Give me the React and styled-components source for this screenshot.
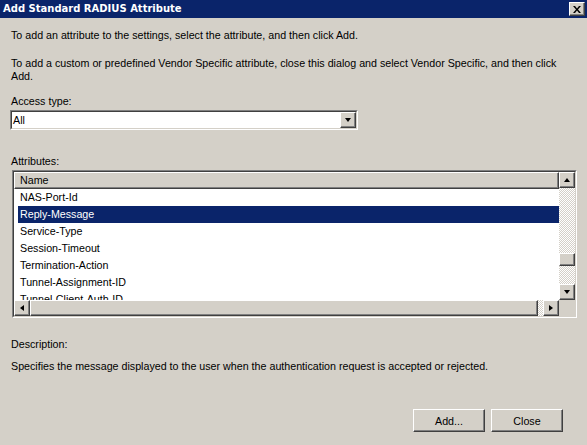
import React from "react";
import styled, { createGlobalStyle, css } from "styled-components";

const GlobalStyle = createGlobalStyle`
  html, body {
    margin: 0;
    padding: 0;
    background: #d4d0c8;
  }
`;

const raised = css`
  border: 1px solid;
  border-color: #fff #404040 #404040 #fff;
  box-shadow: inset -1px -1px #808080, inset 1px 1px #d4d0c8;
  background: #d4d0c8;
  box-sizing: border-box;
`;

const dither = css`
  background-color: #d4d0c8;
  background-image: repeating-conic-gradient(#fff 0 25%, #d4d0c8 0 50%);
  background-size: 2px 2px;
`;

const Dialog = styled.div`
  width: 587px;
  height: 445px;
  display: flex;
  flex-direction: column;
  background: #d4d0c8;
  font-family: "Liberation Sans", Arial, sans-serif;
  font-size: 10.7px;
  line-height: 13px;
  color: #000;
  overflow: hidden;
`;

const TitleBar = styled.div`
  height: 18px;
  flex: none;
  display: flex;
  align-items: center;
  justify-content: space-between;
  padding: 0 2px 0 3px;
  background: #0a246a;
`;

const TitleText = styled.span`
  font-family: "DejaVu Sans", Verdana, sans-serif;
  font-weight: bold;
  font-size: 10px;
  line-height: 18px;
  color: #fff;
`;

const CloseBox = styled.div`
  ${raised};
  width: 16px;
  height: 14px;
  display: flex;
  align-items: center;
  justify-content: center;
`;

const Body = styled.div`
  flex: 1;
  display: flex;
  flex-direction: column;
  padding: 0 11px;
`;

const Text = styled.div`
  margin-top: ${(p) => p.$top}px;
  white-space: nowrap;
`;

const Combo = styled.div`
  margin: 2px 0 0 -1px;
  width: 348px;
  height: 20px;
  box-sizing: border-box;
  border: 1px solid;
  border-color: #808080 #fff #fff #808080;
`;

const ComboInner = styled.div`
  height: 100%;
  box-sizing: border-box;
  border: 1px solid;
  border-color: #404040 #d4d0c8 #d4d0c8 #404040;
  background: #fff;
  display: flex;
  align-items: center;
  justify-content: space-between;
  padding-left: 1px;
`;

const DropButton = styled.div`
  ${raised};
  width: 16px;
  height: 16px;
  display: flex;
  align-items: center;
  justify-content: center;
`;

const ListFrame = styled.div`
  margin: 2px 0 0 1px;
  width: 565px;
  height: 148px;
  box-sizing: border-box;
  border: 1px solid;
  border-color: #808080 #fff #fff #808080;
`;

const ListInner = styled.div`
  height: 100%;
  box-sizing: border-box;
  border: 1px solid;
  border-color: #404040 #d4d0c8 #d4d0c8 #404040;
  background: #fff;
  display: grid;
  grid-template-columns: 1fr 16px;
  grid-template-rows: 1fr 16px;
`;

const ListContent = styled.div`
  overflow: hidden;
  min-height: 0;
`;

const Header = styled.div`
  ${raised};
  box-shadow: inset -1px -1px #808080;
  height: 17px;
  padding-left: 5px;
  line-height: 15px;
`;

const Row = styled.div`
  height: 17px;
  line-height: 17px;
  margin-left: 4px;
  padding-left: 2px;
  white-space: nowrap;
  background: ${(p) => (p.$selected ? "#0a246a" : "transparent")};
  color: ${(p) => (p.$selected ? "#fff" : "#000")};
`;

const VScroll = styled.div`
  ${dither};
  display: flex;
  flex-direction: column;
  min-height: 0;
`;

const HScroll = styled.div`
  ${dither};
  display: flex;
`;

const ScrollBtn = styled.div`
  ${raised};
  width: 16px;
  height: 16px;
  flex: none;
  display: flex;
  align-items: center;
  justify-content: center;
  margin-top: ${(p) => (p.$end ? "auto" : "0")};
`;

const VThumb = styled.div`
  ${raised};
  height: 13px;
  margin-top: 65px;
`;

const HThumb = styled.div`
  ${raised};
  flex: 1;
  margin-right: 5px;
`;

const Corner = styled.div`
  background: #d4d0c8;
`;

const Arrow = styled.span`
  width: 0;
  height: 0;
  border: 4px solid transparent;
  ${(p) =>
    p.$dir === "up" &&
    css`
      border-bottom-color: #000;
      border-top-width: 0;
      border-left-width: 3.5px;
      border-right-width: 3.5px;
      margin-top: -1px;
    `}
  ${(p) =>
    p.$dir === "down" &&
    css`
      border-top-color: #000;
      border-bottom-width: 0;
      border-left-width: 3.5px;
      border-right-width: 3.5px;
    `}
  ${(p) =>
    p.$dir === "left" &&
    css`
      border-right-color: #000;
      border-left-width: 0;
      border-top-width: 3.5px;
      border-bottom-width: 3.5px;
    `}
  ${(p) =>
    p.$dir === "right" &&
    css`
      border-left-color: #000;
      border-right-width: 0;
      border-top-width: 3.5px;
      border-bottom-width: 3.5px;
    `}
`;

const ButtonRow = styled.div`
  margin-top: auto;
  display: flex;
  justify-content: flex-end;
  gap: 6px;
  padding: 0 13px 13px 0;
`;

const PushButton = styled.button`
  width: 72px;
  height: 23px;
  border: 1px solid;
  border-color: #fff #404040 #404040 #fff;
  box-shadow: inset -1px -1px #808080;
  background: #d4d0c8;
  font-family: "Liberation Sans", Arial, sans-serif;
  font-size: 10.7px;
  color: #000;
  padding: 0;
`;

const attributes = [
  "NAS-Port-Id",
  "Reply-Message",
  "Service-Type",
  "Session-Timeout",
  "Termination-Action",
  "Tunnel-Assignment-ID",
  "Tunnel-Client-Auth-ID",
];

export default function App() {
  return (
    <Dialog>
      <GlobalStyle />
      <TitleBar>
        <TitleText>Add Standard RADIUS Attribute</TitleText>
        <CloseBox>
          <svg width="8" height="7" viewBox="0 0 8 7">
            <path d="M0 0h2l2 2.4L6 0h2L5 3.5 8 7H6L4 4.6 2 7H0l3-3.5z" fill="#000" />
          </svg>
        </CloseBox>
      </TitleBar>
      <Body>
        <Text $top={11}>
          To add an attribute to the settings, select the attribute, and then click Add.
        </Text>
        <Text $top={15}>
          To add a custom or predefined Vendor Specific attribute, close this dialog and select Vendor Specific, and then click
          <br />
          Add.
        </Text>
        <Text $top={12}>Access type:</Text>
        <Combo>
          <ComboInner>
            <span>All</span>
            <DropButton>
              <Arrow $dir="down" />
            </DropButton>
          </ComboInner>
        </Combo>
        <Text $top={25}>Attributes:</Text>
        <ListFrame>
          <ListInner>
            <ListContent>
              <Header>Name</Header>
              {attributes.map((a) => (
                <Row key={a} $selected={a === "Reply-Message"}>
                  {a}
                </Row>
              ))}
            </ListContent>
            <VScroll>
              <ScrollBtn>
                <Arrow $dir="up" />
              </ScrollBtn>
              <VThumb />
              <ScrollBtn $end>
                <Arrow $dir="down" />
              </ScrollBtn>
            </VScroll>
            <HScroll>
              <ScrollBtn>
                <Arrow $dir="left" />
              </ScrollBtn>
              <HThumb />
              <ScrollBtn>
                <Arrow $dir="right" />
              </ScrollBtn>
            </HScroll>
            <Corner />
          </ListInner>
        </ListFrame>
        <Text $top={20}>Description:</Text>
        <Text $top={9}>
          Specifies the message displayed to the user when the authentication request is accepted or rejected.
        </Text>
        <ButtonRow>
          <PushButton>Add...</PushButton>
          <PushButton>Close</PushButton>
        </ButtonRow>
      </Body>
    </Dialog>
  );
}
